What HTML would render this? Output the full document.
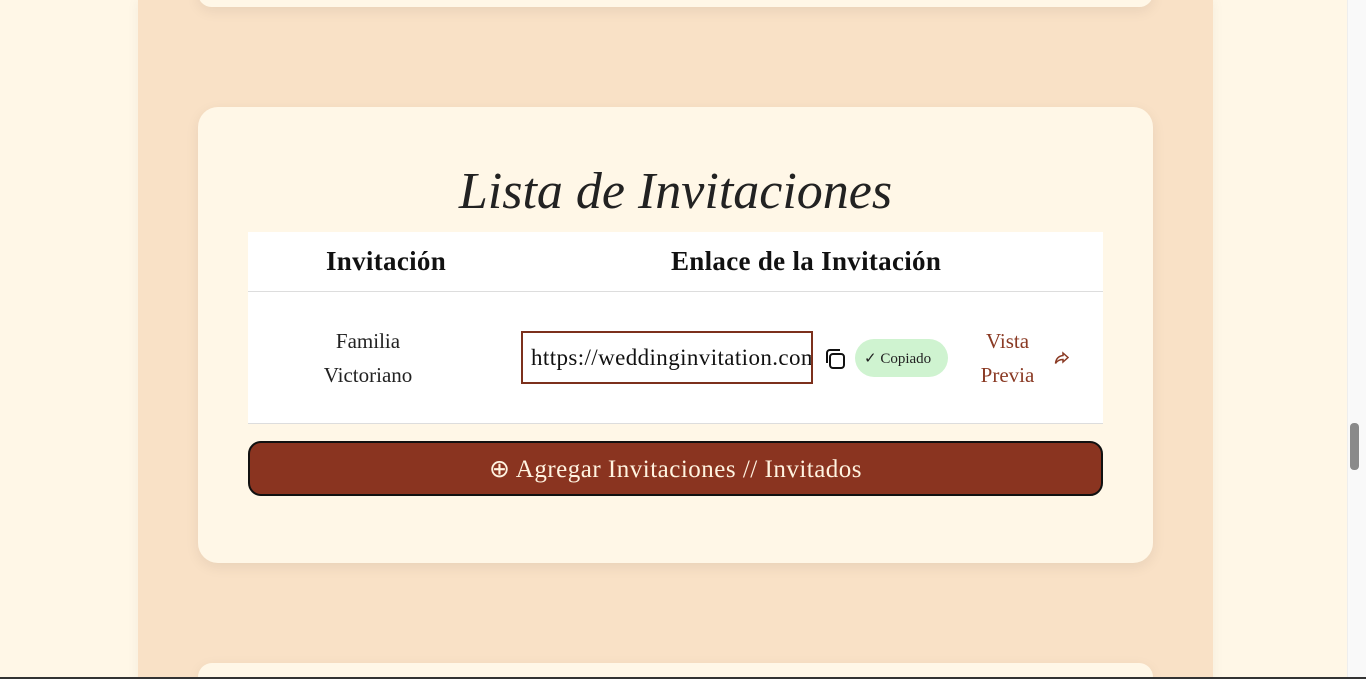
<!DOCTYPE html>
<html style="overflow:hidden;height:683px"><head><style>
*{margin:0;padding:0;box-sizing:border-box}
body{width:1366px;height:683px;overflow:hidden;background:#fff7e7;font-family:"Liberation Serif",serif;position:relative}
.col{position:absolute;left:138px;top:0;width:1075px;height:683px;background:#f9e1c6;box-shadow:0 0 12px rgba(0,0,0,.05)}
.card{position:absolute;left:198px;width:955px;background:#fff7e7;border-radius:20px;box-shadow:0 4px 14px rgba(0,0,0,.07)}
.sb{position:absolute;left:1347px;top:0;width:19px;height:677px;background:#f9f9f9;border-left:1px solid #eee}
.th{position:absolute;left:1350px;top:423px;width:9px;height:47px;background:#8a8a8a;border-radius:4px}
.bot{position:absolute;left:0;top:677px;width:1366px;height:6px;background:#fff;border-top:2px solid #333}
</style></head><body>
<div class="col"></div>
<div class="card" style="top:-20px;height:27px"></div>
<div class="card" style="top:107px;height:456px">
 <div style="position:absolute;left:0;width:100%;top:55px;text-align:center;font-size:52px;font-style:italic;color:#222;letter-spacing:0">Lista de Invitaciones</div>
 <div style="position:absolute;left:50px;top:125px;width:855px;height:60px;background:#fff;border-bottom:1px solid #ddd">
  <div style="position:absolute;left:78px;top:14px;font-size:27px;color:#111;font-weight:bold;letter-spacing:.3px">Invitación</div>
  <div style="position:absolute;left:423px;top:14px;font-size:27px;color:#111;font-weight:bold;letter-spacing:.3px">Enlace de la Invitación</div>
 </div>
 <div style="position:absolute;left:50px;top:185px;width:855px;height:132px;background:#fff;border-bottom:1px solid #ddd">
  <div style="position:absolute;left:40px;top:32px;width:160px;text-align:center;font-size:21px;line-height:34px;color:#222">Familia<br>Victoriano</div>
  <div style="position:absolute;left:273px;top:39px;width:292px;height:53px;border:2px solid #7c301c;overflow:hidden;white-space:nowrap;font-size:23px;padding:12px 0 0 8px;color:#111;letter-spacing:.4px">https://weddinginvitation.com</div>
  <svg style="position:absolute;left:575px;top:55px" width="24" height="24" viewBox="0 0 24 24" fill="none" stroke="#111" stroke-width="2"><rect x="7" y="7" width="14" height="14" rx="3"/><path d="M4 16V6a3 3 0 0 1 3-3h10"/></svg>
  <div style="position:absolute;left:607px;top:47px;width:93px;height:38px;border-radius:19px;background:#cff3d0;font-size:15px;color:#222;padding:10px 0 0 9px">✓ Copiado</div>
  <div style="position:absolute;left:722px;top:32px;width:75px;text-align:center;font-size:21px;line-height:34px;color:#8a3a24">Vista<br>Previa</div>
  <svg style="position:absolute;left:806px;top:59px" width="15" height="14" viewBox="0 0 15 14" fill="none" stroke="#8a3a24" stroke-width="1.5"><path d="M9 2l5 4.5-5 4.5V8.5C5 8.5 3 10 1.5 12.5 2 8 4.5 5 9 4.5z"/></svg>
 </div>
 <div style="position:absolute;left:50px;top:334px;width:855px;height:55px;background:#8a3420;border:2px solid #111;border-radius:13px;color:#fff3e0;font-size:25px;text-align:center;padding-top:11px;letter-spacing:.5px">⊕ Agregar Invitaciones // Invitados</div>
</div>
<div class="card" style="top:663px;height:14px;border-radius:20px 20px 0 0"></div>
<div class="sb"></div><div class="th"></div>
<div class="bot"></div>
</body></html>
